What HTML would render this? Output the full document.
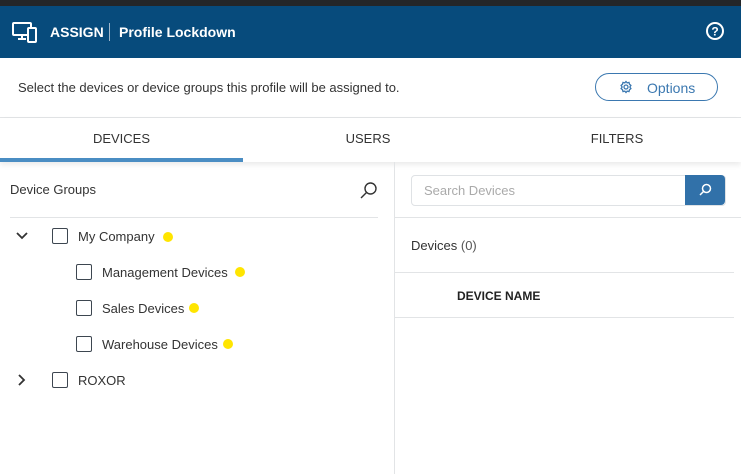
<!DOCTYPE html>
<html><head><style>
*{box-sizing:border-box;margin:0;padding:0}
body{width:741px;height:474px;overflow:hidden;background:#fff;font-family:"Liberation Sans",sans-serif;position:relative;color:#333}
.a{position:absolute}
.t{font-size:13px;white-space:nowrap}
.cb{position:absolute;width:16px;height:16px;border:1.5px solid #3d4650;border-radius:2px}
.dot{position:absolute;width:10px;height:10px;border-radius:50%;background:#ffe500}
</style></head><body>
<div class="a" style="left:0;top:0;width:741px;height:6px;background:#242628"></div>
<div class="a" style="left:0;top:6px;width:741px;height:52px;background:#074b7c"></div>
<svg class="a" style="left:12px;top:21px" width="26" height="22" viewBox="0 0 26 22" fill="none" stroke="#fff" stroke-width="2"><rect x="1" y="2" width="18" height="12" rx="1"/><path d="M6 18h8M10 14v4"/><rect x="16" y="7" width="8" height="14" rx="1" fill="#074b7c"/></svg>
<div class="a t" style="left:50px;top:24px;color:#fff;font-weight:bold;font-size:14px">ASSIGN</div>
<div class="a" style="left:109px;top:23px;width:1px;height:18px;background:#9fb7cc"></div>
<div class="a t" style="left:119px;top:24px;color:#fff;font-weight:bold;font-size:14px">Profile Lockdown</div>
<svg class="a" style="left:705px;top:21px" width="20" height="20" viewBox="0 0 20 20"><circle cx="10" cy="10" r="8" fill="none" stroke="#fff" stroke-width="2"/><text x="10" y="14.5" text-anchor="middle" font-size="12" font-weight="bold" fill="#fff" font-family="Liberation Sans">?</text></svg>
<div class="a t" style="left:18px;top:80px;color:#333">Select the devices or device groups this profile will be assigned to.</div>
<div class="a" style="left:595px;top:73px;width:123px;height:28px;border:1.3px solid #3b78b0;border-radius:14px"></div>
<svg class="a" style="left:619px;top:80px" width="14" height="14" viewBox="0 0 14 14" fill="none" stroke="#3b78b0" stroke-width="1.3"><circle cx="7" cy="7" r="2"/><path d="M7 1.5l1.2 1.4 1.8-.5.5 1.8 1.4 1.2-1 1.6 1 1.6-1.4 1.2-.5 1.8-1.8-.5L7 12.5 5.8 11.1 4 11.6l-.5-1.8L2.1 8.6 3.1 7 2.1 5.4 3.5 4.2 4 2.4l1.8.5z"/></svg>
<div class="a t" style="left:647px;top:80px;color:#3b78b0;font-size:14px">Options</div>
<div class="a" style="left:0;top:117px;width:741px;height:1px;background:#e2e4e6"></div>
<div class="a" style="left:0;top:118px;width:741px;height:44px;box-shadow:0 3px 5px rgba(0,0,0,.08)"></div>
<div class="a t" style="left:0;top:131px;width:243px;text-align:center;color:#333">DEVICES</div>
<div class="a t" style="left:243px;top:131px;width:250px;text-align:center;color:#333">USERS</div>
<div class="a t" style="left:493px;top:131px;width:248px;text-align:center;color:#333">FILTERS</div>
<div class="a" style="left:0;top:158px;width:243px;height:4px;background:#4a8dc3"></div>
<div class="a" style="left:394px;top:162px;width:1px;height:312px;background:#e2e4e6"></div>
<div class="a t" style="left:10px;top:182px;color:#333">Device Groups</div>
<svg class="a" style="left:359px;top:181px" width="19" height="19" viewBox="0 0 19 19" fill="none" stroke="#333" stroke-width="1.4"><circle cx="11.5" cy="7.5" r="5.5"/><path d="M7.5 11.5L2 17"/></svg>
<div class="a" style="left:10px;top:217px;width:368px;height:1px;background:#e2e4e6"></div>
<svg class="a" style="left:16px;top:231px" width="12" height="10" viewBox="0 0 12 10" fill="none" stroke="#333" stroke-width="1.8"><path d="M1 2l5 5 5-5"/></svg>
<div class="cb" style="left:52px;top:228px"></div><div class="a t" style="left:78px;top:229px;color:#333">My Company</div><div class="dot" style="left:163px;top:232px"></div>
<div class="cb" style="left:76px;top:264px"></div><div class="a t" style="left:102px;top:265px">Management Devices</div><div class="dot" style="left:235px;top:267px"></div>
<div class="cb" style="left:76px;top:300px"></div><div class="a t" style="left:102px;top:301px">Sales Devices</div><div class="dot" style="left:189px;top:303px"></div>
<div class="cb" style="left:76px;top:336px"></div><div class="a t" style="left:102px;top:337px">Warehouse Devices</div><div class="dot" style="left:223px;top:339px"></div>
<svg class="a" style="left:17px;top:374px" width="10" height="12" viewBox="0 0 10 12" fill="none" stroke="#333" stroke-width="1.8"><path d="M2 1l5 5-5 5"/></svg>
<div class="cb" style="left:52px;top:372px"></div><div class="a t" style="left:78px;top:373px">ROXOR</div>
<div class="a" style="left:411px;top:175px;width:315px;height:31px;border:1px solid #dfe2e5;border-radius:4px"></div>
<div class="a t" style="left:424px;top:183px;color:#aaa">Search Devices</div>
<div class="a" style="left:685px;top:175px;width:40px;height:30px;background:#3171a9;border-radius:0 4px 4px 0"></div>
<svg class="a" style="left:697px;top:182px" width="16" height="16" viewBox="0 0 16 16" fill="none" stroke="#fff" stroke-width="1.5"><circle cx="9.5" cy="6.5" r="4"/><path d="M6.5 9.5L3 13"/></svg>
<div class="a" style="left:395px;top:217px;width:346px;height:1px;background:#e2e4e6"></div>
<div class="a t" style="left:411px;top:238px;color:#333">Devices <span style="color:#555">(0)</span></div>
<div class="a" style="left:395px;top:272px;width:339px;height:1px;background:#e2e4e6"></div>
<div class="a t" style="left:457px;top:289px;color:#222;font-weight:bold;font-size:12px">DEVICE NAME</div>
<div class="a" style="left:395px;top:317px;width:339px;height:1px;background:#e2e4e6"></div>
</body></html>
